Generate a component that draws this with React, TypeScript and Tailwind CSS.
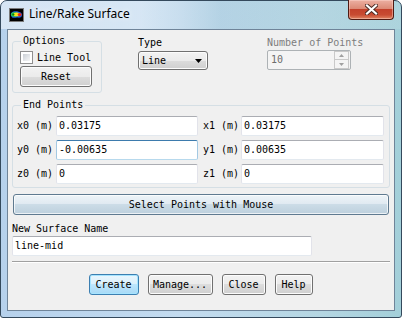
import React from "react";

const mono = "font-['DejaVu_Sans_Mono',monospace] text-[10px] leading-[12px] text-black";

function TextBox({ w, value, focused }: { w: string; value: string; focused?: boolean }) {
  const border = focused
    ? "border-t-[#3d7bad] border-l-[#a4c9e3] border-r-[#a4c9e3] border-b-[#b7d9ed]"
    : "border-t-[#abadb3] border-l-[#e2e3ea] border-r-[#e2e3ea] border-b-[#e3e9ef]";
  return (
    <div className={`h-[20px] ${w} shrink-0 bg-white border rounded-[2px] flex items-center pl-[2px] whitespace-pre ${border} ${mono}`}>
      {value}
    </div>
  );
}

function Btn({ w, label, def }: { w: string; label: string; def?: boolean }) {
  const look = def
    ? "border-[#3c7fb1] bg-[linear-gradient(180deg,#eaf6fd_0%,#d9f0fc_50%,#bee6fd_50%,#a7d9f5_100%)] shadow-[inset_0_0_0_1px_#a6e4ff]"
    : "border-[#707070] bg-[linear-gradient(180deg,#f2f2f2_0%,#ebebeb_50%,#dddddd_50%,#cfcfcf_100%)] shadow-[inset_0_0_0_1px_#fcfcfc]";
  return (
    <div className={`h-[21px] ${w} shrink-0 border rounded-[3px] flex items-center justify-center whitespace-pre ${look} ${mono}`}>
      {label}
    </div>
  );
}

function Group({ label, className, children }: { label: string; className: string; children?: React.ReactNode }) {
  return (
    <div className={`relative border border-[#d5dfe5] rounded-[3px] ${className}`}>
      <span className={`absolute left-[8px] -top-[7px] px-[2px] bg-[#f0f0f0] whitespace-pre ${mono}`}>{label}</span>
      {children}
    </div>
  );
}

function FluentIcon() {
  return (
    <svg width="15" height="14" viewBox="0 0 15 14" className="ml-[8px] mt-[7px] shrink-0">
      <rect x="0.5" y="0.5" width="14" height="13" fill="#000" stroke="#7a7a7a" />
      <path d="M2 5.5 C3 3.2,7 3,9.5 3.8 C11.8 4.2,13 5.2,13 7 C13 9,11 10.2,8.5 9.6 C6.5 9.4,4.5 10.4,3.2 9.4 C2 8.6,1.6 6.6,2 5.5Z" fill="#1f5fe0" />
      <ellipse cx="5.5" cy="6.5" rx="3.4" ry="2.2" fill="#2ed13a" />
      <ellipse cx="7.8" cy="6.4" rx="3.2" ry="1.9" fill="#f3e41c" />
      <ellipse cx="10.6" cy="6.6" rx="1.9" ry="1.6" fill="#e8261a" />
      <ellipse cx="4.3" cy="6.6" rx="1.2" ry="1" fill="#0a7a1a" />
    </svg>
  );
}

function CloseBtn() {
  return (
    <div className="ml-auto -mt-[1px] mr-[7px] w-[46px] h-[20px] shrink-0 rounded-b-[4px] border border-t-0 border-[#4f1a12] bg-[linear-gradient(180deg,#ecb0a2_0%,#dc8a76_45%,#c3412b_50%,#c84b32_78%,#e08462_100%)] shadow-[inset_0_0_0_1px_rgba(255,220,210,0.45)] flex items-center justify-center">
      <svg width="13" height="11" viewBox="0 0 13 11">
        <path d="M2 1.5 L11 9.5 M11 1.5 L2 9.5" stroke="#4a2a24" strokeWidth="4" strokeLinecap="square" />
        <path d="M2 1.5 L11 9.5 M11 1.5 L2 9.5" stroke="#ffffff" strokeWidth="2.2" strokeLinecap="square" />
      </svg>
    </div>
  );
}

function PointRow({ a, av, b, bv, focused }: { a: string; av: string; b: string; bv: string; focused?: boolean }) {
  return (
    <div className="flex items-center h-[20px]">
      <span className={`w-[36px] whitespace-pre ${mono}`}>{a}</span>
      <div className="ml-[3px]">
        <TextBox w="w-[142px]" value={av} focused={focused} />
      </div>
      <span className={`ml-[5px] w-[36px] whitespace-pre ${mono}`}>{b}</span>
      <div className="ml-[2px]">
        <TextBox w="w-[143px]" value={bv} />
      </div>
    </div>
  );
}

export default function App() {
  return (
    <div className="w-[402px] h-[318px] flex flex-col border border-[#34495c] rounded-t-[7px] rounded-b-[3px] bg-[linear-gradient(90deg,#b6d1ec_0%,#c3dbef_45%,#b4d6e2_80%,#a3cfd9_100%)]">
      <div className="h-[28px] shrink-0 flex items-start rounded-t-[6px] bg-[linear-gradient(90deg,rgba(255,255,255,0.45)_0%,rgba(255,255,255,0.35)_35%,rgba(120,170,190,0.15)_55%,rgba(255,255,255,0.1)_100%)]">
        <FluentIcon />
        <span className="ml-[5px] mt-[5px] font-['Noto_Sans',sans-serif] text-[12px] leading-[16px] text-black [text-shadow:0_0_6px_rgba(255,255,255,0.9)]">
          Line/Rake Surface
        </span>
        <CloseBtn />
      </div>
      <div className="mx-[6px] h-[282px] shrink-0 border border-[#6f8499] bg-[#f0f0f0] flex flex-col px-[4px]">
        {/* top row */}
        <div className="flex items-start h-[63px] shrink-0">
          <Group label="Options" className="mt-[11px] w-[90px] h-[52px] pl-[7px] pt-[9px] shrink-0">
            <div className="flex items-center h-[13px] gap-[4px]">
              <div className="w-[13px] h-[13px] border border-[#8f8f8f] bg-white p-[2px]">
                <div className="w-full h-full bg-[linear-gradient(135deg,#cbcfd5_0%,#e6e8eb_60%,#f6f6f6_100%)]" />
              </div>
              <span className={`whitespace-pre ${mono}`}>Line Tool</span>
            </div>
            <div className="mt-[2px]">
              <Btn w="w-[72px]" label="Reset" />
            </div>
          </Group>
          <div className="ml-[36px] mt-[7px] flex flex-col shrink-0">
            <span className={mono}>Type</span>
            <div className="mt-[2px] w-[70px] h-[19px] border border-[#707070] rounded-[3px] bg-[linear-gradient(180deg,#f2f2f2_0%,#ebebeb_50%,#dddddd_50%,#cfcfcf_100%)] shadow-[inset_0_0_0_1px_#fcfcfc] flex items-center pl-[3px] pr-[5px]">
              <span className={mono}>Line</span>
              <svg width="7" height="4" viewBox="0 0 7 4" className="ml-auto">
                <path d="M0 0 L7 0 L3.5 4 Z" fill="#000" />
              </svg>
            </div>
          </div>
          <div className="ml-[59px] mt-[7px] flex flex-col shrink-0">
            <span className={`whitespace-pre font-['DejaVu_Sans_Mono',monospace] text-[10px] leading-[12px] text-[#7d7d7d]`}>Number of Points</span>
            <div className="mt-[1px] w-[84px] h-[20px] border border-[#adb2b5] rounded-[2px] bg-[#f4f4f4] flex items-center pl-[3px] pr-[1px]">
              <span className="font-['DejaVu_Sans_Mono',monospace] text-[10px] leading-[12px] text-[#6d6d6d]">10</span>
              <div className="ml-auto flex flex-col h-[18px] w-[15px]">
                <div className="h-[9px] border border-[#c9c9c9] bg-[#f4f4f4] flex items-center justify-center">
                  <svg width="5" height="3" viewBox="0 0 5 3"><path d="M0 3 L5 3 L2.5 0 Z" fill="#a0a0a0" /></svg>
                </div>
                <div className="h-[9px] border border-t-0 border-[#c9c9c9] bg-[#f4f4f4] flex items-center justify-center">
                  <svg width="5" height="3" viewBox="0 0 5 3"><path d="M0 0 L5 0 L2.5 3 Z" fill="#a0a0a0" /></svg>
                </div>
              </div>
            </div>
          </div>
        </div>

        {/* End points */}
        <Group label="End Points" className="mt-[12px] w-[378px] h-[83px] shrink-0 pt-[10px] pl-[4px] flex flex-col gap-[4px]">
          <PointRow a="x0 (m)" av="0.03175" b="x1 (m)" bv="0.03175" />
          <PointRow a="y0 (m)" av="-0.00635" b="y1 (m)" bv="0.00635" focused />
          <PointRow a="z0 (m)" av="0" b="z1 (m)" bv="0" />
        </Group>

        <div className="mt-[6px] ml-[1px] w-[376px] h-[21px] shrink-0 border border-[#5f7a90] rounded-[3px] bg-[linear-gradient(180deg,#eef4f8_0%,#dfe9f1_50%,#ccdce7_50%,#bdd0dd_100%)] shadow-[inset_0_0_0_1px_rgba(255,255,255,0.7)] flex items-center justify-center">
          <span className={`whitespace-pre ${mono}`}>Select Points with Mouse</span>
        </div>

        <span className={`mt-[8px] whitespace-pre ${mono}`}>New Surface Name</span>
        <div className="mt-[1px]">
          <TextBox w="w-[300px]" value="line-mid" />
        </div>

        <div className="mt-[5px] h-[2px] w-[378px] shrink-0 border-t border-t-[#a0a0a0] border-b border-b-white" />

        <div className="mt-[11px] flex justify-center gap-[9px] pr-[1px]">
          <Btn w="w-[50px]" label="Create" def />
          <Btn w="w-[65px]" label="Manage..." />
          <Btn w="w-[44px]" label="Close" />
          <Btn w="w-[38px]" label="Help" />
        </div>
      </div>
    </div>
  );
}
